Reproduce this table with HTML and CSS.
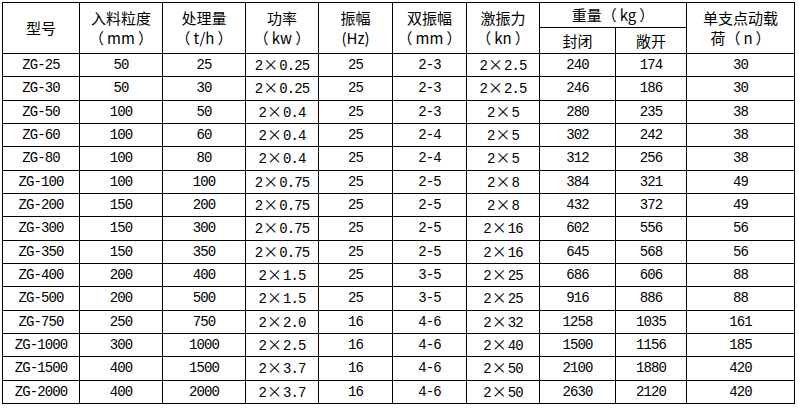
FILE: index.html
```html
<!DOCTYPE html>
<html lang="zh">
<head>
<meta charset="utf-8">
<title>规格参数</title>
<link rel="stylesheet" href="styles.css">
</head>
<body>
<table class="spec">
  <colgroup>
    <col class="c1"><col class="c2"><col class="c3"><col class="c4"><col class="c5">
    <col class="c6"><col class="c7"><col class="c8"><col class="c9"><col class="c10">
  </colgroup>
  <thead>
    <tr class="h1">
      <th rowspan="2">型号</th>
      <th rowspan="2">入料粒度<br>（<span class="u">mm</span>）</th>
      <th rowspan="2">处理量<br>（<span class="u">t/h</span>）</th>
      <th rowspan="2">功率<br>（<span class="u">kw</span>）</th>
      <th rowspan="2">振幅<br>(Hz)</th>
      <th rowspan="2">双振幅<br>（<span class="u">mm</span>）</th>
      <th rowspan="2">激振力<br>（<span class="u">kn</span>）</th>
      <th colspan="2">重量（<span class="u">kg</span>）</th>
      <th rowspan="2">单支点动载<br>荷（<span class="u">n</span>）</th>
    </tr>
    <tr class="h2">
      <th>封闭</th>
      <th>敞开</th>
    </tr>
  </thead>
  <tbody>
    <tr><td>ZG-25</td><td>50</td><td>25</td><td>2<span class="x">×</span>0.25</td><td>25</td><td>2-3</td><td>2<span class="x">×</span>2.5</td><td>240</td><td>174</td><td>30</td></tr>
    <tr><td>ZG-30</td><td>50</td><td>30</td><td>2<span class="x">×</span>0.25</td><td>25</td><td>2-3</td><td>2<span class="x">×</span>2.5</td><td>246</td><td>186</td><td>30</td></tr>
    <tr><td>ZG-50</td><td>100</td><td>50</td><td>2<span class="x">×</span>0.4</td><td>25</td><td>2-3</td><td>2<span class="x">×</span>5</td><td>280</td><td>235</td><td>38</td></tr>
    <tr><td>ZG-60</td><td>100</td><td>60</td><td>2<span class="x">×</span>0.4</td><td>25</td><td>2-4</td><td>2<span class="x">×</span>5</td><td>302</td><td>242</td><td>38</td></tr>
    <tr><td>ZG-80</td><td>100</td><td>80</td><td>2<span class="x">×</span>0.4</td><td>25</td><td>2-4</td><td>2<span class="x">×</span>5</td><td>312</td><td>256</td><td>38</td></tr>
    <tr><td>ZG-100</td><td>100</td><td>100</td><td>2<span class="x">×</span>0.75</td><td>25</td><td>2-5</td><td>2<span class="x">×</span>8</td><td>384</td><td>321</td><td>49</td></tr>
    <tr><td>ZG-200</td><td>150</td><td>200</td><td>2<span class="x">×</span>0.75</td><td>25</td><td>2-5</td><td>2<span class="x">×</span>8</td><td>432</td><td>372</td><td>49</td></tr>
    <tr><td>ZG-300</td><td>150</td><td>300</td><td>2<span class="x">×</span>0.75</td><td>25</td><td>2-5</td><td>2<span class="x">×</span>16</td><td>602</td><td>556</td><td>56</td></tr>
    <tr><td>ZG-350</td><td>150</td><td>350</td><td>2<span class="x">×</span>0.75</td><td>25</td><td>2-5</td><td>2<span class="x">×</span>16</td><td>645</td><td>568</td><td>56</td></tr>
    <tr><td>ZG-400</td><td>200</td><td>400</td><td>2<span class="x">×</span>1.5</td><td>25</td><td>3-5</td><td>2<span class="x">×</span>25</td><td>686</td><td>606</td><td>88</td></tr>
    <tr><td>ZG-500</td><td>200</td><td>500</td><td>2<span class="x">×</span>1.5</td><td>25</td><td>3-5</td><td>2<span class="x">×</span>25</td><td>916</td><td>886</td><td>88</td></tr>
    <tr><td>ZG-750</td><td>250</td><td>750</td><td>2<span class="x">×</span>2.0</td><td>16</td><td>4-6</td><td>2<span class="x">×</span>32</td><td>1258</td><td>1035</td><td>161</td></tr>
    <tr><td>ZG-1000</td><td>300</td><td>1000</td><td>2<span class="x">×</span>2.5</td><td>16</td><td>4-6</td><td>2<span class="x">×</span>40</td><td>1500</td><td>1156</td><td>185</td></tr>
    <tr><td>ZG-1500</td><td>400</td><td>1500</td><td>2<span class="x">×</span>3.7</td><td>16</td><td>4-6</td><td>2<span class="x">×</span>50</td><td>2100</td><td>1880</td><td>420</td></tr>
    <tr><td>ZG-2000</td><td>400</td><td>2000</td><td>2<span class="x">×</span>3.7</td><td>16</td><td>4-6</td><td>2<span class="x">×</span>50</td><td>2630</td><td>2120</td><td>420</td></tr>
  </tbody>
</table>
</body>
</html>
```
FILE: styles.css
```css
html, body {
  margin: 0;
  background: #fff;
}
body {
  padding: 2px;
  color: #000;
  font-family: "Liberation Mono", "Noto Sans CJK SC", monospace;
}
.spec {
  border-collapse: collapse;
  table-layout: fixed;
  width: 792px;
}
.c1 { width: 77px; }
.c2 { width: 83px; }
.c3 { width: 83px; }
.c4 { width: 73px; }
.c5 { width: 74px; }
.c6 { width: 74px; }
.c7 { width: 73px; }
.c8 { width: 76px; }
.c9 { width: 71px; }
.c10 { width: 108px; }
.spec th,
.spec td {
  border: 1px solid #000;
  padding: 0;
  text-align: center;
  vertical-align: middle;
  white-space: nowrap;
  overflow: hidden;
}
.spec th {
  font-family: "Noto Sans CJK SC", sans-serif;
  font-weight: normal;
  font-size: 15px;
  line-height: 20px;
}
.u {
  display: inline-block;
  padding: 0 3px;
}
.h1 { height: 25px; }
.h2 { height: 26px; }
.spec tbody tr { height: 23.33px; }
.spec td {
  font-size: 14px;
  line-height: 16px;
  letter-spacing: -0.9px;
}
.x {
  font-family: "Noto Sans CJK SC", sans-serif;
  font-size: 15px;
  letter-spacing: 0;
  padding: 0 1px;
}
```
